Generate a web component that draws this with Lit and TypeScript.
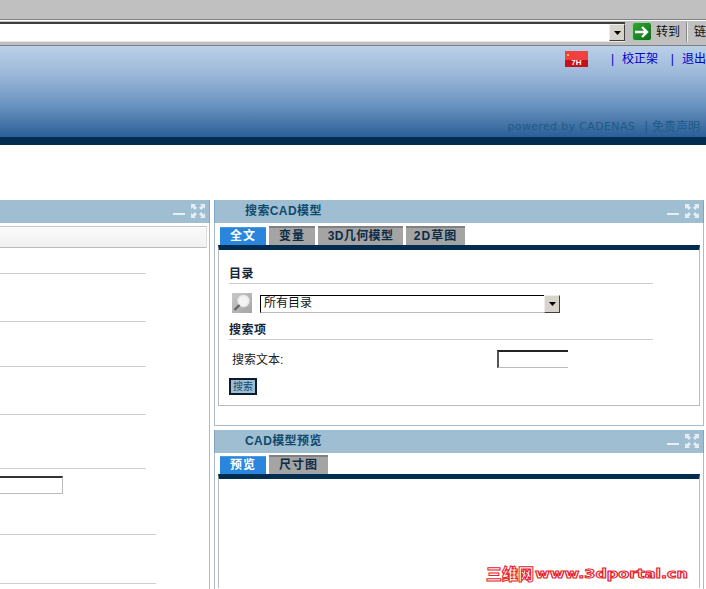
import { LitElement, html, css } from "lit";
import { customElement } from "lit/decorators.js";

const winIcons = html`<div class="win">
  <span class="min"></span>
  <svg width="14" height="14" viewBox="0 0 14 14" fill="#e4edf3">
    <path d="M0 0h5L3.6 1.4 6 3.8 3.8 6 1.4 3.6 0 5z"/>
    <path d="M14 0v5l-1.4-1.4L10.2 6 8 3.8l2.4-2.4L9 0z"/>
    <path d="M0 14V9l1.4 1.4L3.8 8 6 10.2l-2.4 2.4L5 14z"/>
    <path d="M14 14H9l1.4-1.4L8 10.2 10.2 8l2.4 2.4L14 9z"/>
  </svg>
</div>`;

const arrow = html`<svg width="7" height="4" viewBox="0 0 7 4"><path d="M0 0h7L3.5 4z" fill="#000"/></svg>`;

@customElement("app-root")
export class AppRoot extends LitElement {
  static styles = css`
    :host { display: block; width: 706px; height: 589px; overflow: hidden; position: relative; background: #fff; font: 12px "Liberation Sans", "Noto Sans CJK SC", sans-serif; color: #111; }
    .toolbar { height: 46px; box-sizing: border-box; background: #c0c0c0; padding-top: 19px; }
    .bar { height: 27px; box-sizing: border-box; border-top: 1px solid #808080; border-bottom: 1px solid #808080; padding-top: 1px; box-shadow: inset 0 1px 0 #fff; display: flex; align-items: flex-start; }
    .bar > * { flex: none; }
    .addr { width: 625px; height: 20px; margin-top: 1px; box-sizing: border-box; background: #fff; border-top: 2px solid #404040; border-bottom: 1px solid #e8e8e8; display: flex; justify-content: flex-end; }
    .drop { width: 16px; height: 17px; flex: none; box-sizing: border-box; background: #d8d4cc; border: 1px solid; border-color: #eee #404040 #404040 #eee; display: flex; align-items: center; justify-content: center; }
    .go { margin: 1px 0 0 7px; width: 20px; height: 19px; box-sizing: border-box; border: 1px solid #9fd09f; border-radius: 3px; background: linear-gradient(135deg, #35a535, #0a6e1a); display: flex; align-items: center; justify-content: center; }
    .gotext { margin: 3px 0 0 4px; width: 30px; color: #111; line-height: 16px; }
    .sep { width: 1px; height: 20px; margin-top: 1px; background: #888; border-right: 1px solid #eee; }
    .lnk { margin: 3px 0 0 6px; line-height: 16px; white-space: nowrap; }
    .head { height: 91px; box-sizing: border-box; background: linear-gradient(#bad0e8 0%, #9db9da 30%, #6f97c2 62%, #2a5f98 100%); display: flex; flex-direction: column; padding-top: 4px; }
    .links { display: flex; align-items: center; height: 14px; color: #0000c8; }
    .flag { width: 23px; height: 16px; margin: 3px 0 0 565px; background: linear-gradient(#f04040 0 55%, #c81018 55%); color: #fff; font: bold 8px/9px "Liberation Sans", sans-serif; display: flex; align-items: flex-end; justify-content: center; position: relative; }
    .star { position: absolute; left: 2px; top: 3px; width: 2px; height: 2px; background: #fc0; }
    .l1 { margin-left: 23px; width: 60px; white-space: nowrap; }
    .l2 { white-space: nowrap; }
    .gap { margin-left: 8px; }
    .pw { margin-top: auto; height: 17px; display: flex; justify-content: flex-end; padding-right: 6px; color: #1e5a88; font: 11px/14px "DejaVu Sans", "Noto Sans CJK SC", sans-serif; letter-spacing: 0.35px; }
    .pw span:last-child { margin-left: 9px; letter-spacing: 0; font-size: 12px; }
    .dark { height: 8px; background: #002d4f; }
    .cols { display: flex; margin-top: 55px; align-items: flex-start; }
    .left { width: 210px; height: 389px; box-sizing: border-box; border-right: 1px solid #a8bccb; flex: none; }
    .right { width: 490px; margin-left: 4px; flex: none; }
    .ph { height: 23px; box-sizing: border-box; background: #a0bed2; display: flex; align-items: flex-start; color: #0f4a6e; font-weight: bold; font-size: 12px; letter-spacing: 0.4px; padding-left: 30px; line-height: 22px; box-shadow: -1px 0 0 #7fa5c6, 1px 0 0 #7fa5c6; }
    .left .ph { padding: 0; }
    .win { margin-left: auto; margin-right: 4px; margin-top: 4px; display: flex; align-items: flex-start; gap: 6px; }
    .min { width: 12px; height: 2px; background: #e8eff4; margin-top: 9px; }
    .strip { height: 22px; margin: 3px 2px 0 0; box-sizing: border-box; border-top: 1px solid #c4c4c4; border-bottom: 1px solid #bbb; background: linear-gradient(#fafafa, #f0f0f0); border-right: 1px solid #ddd; }
    .row { width: 146px; box-sizing: border-box; border-bottom: 1px solid #cfcfcf; display: flow-root; }
    .row.wide { width: 156px; }
    .lin { display: block; width: 63px; height: 18px; margin-top: 7px; box-sizing: border-box; border-top: 2px solid #333; border-right: 1px solid #bbb; border-bottom: 1px solid #bbb; }
    .panel { box-sizing: border-box; border-left: 1px solid #a8bccb; border-right: 1px solid #a8bccb; }
    .panel.one { height: 226px; border-bottom: 1px solid #a8bccb; }
    .panel.two { height: 159px; margin-top: 4px; }
    .tabs { display: flex; gap: 3px; padding: 0 0 0 5px; height: 22px; box-sizing: border-box; align-items: flex-end; }
    .two .tabs { height: 21px; }
    .tab { height: 19px; box-sizing: border-box; border-top: 2px solid #808080; background: #a4a4a4; color: #0c2c48; font-weight: bold; text-align: center; line-height: 16px; letter-spacing: 1px; }
    .tab.on { background: #2a86dc; color: #fff; border-top: 1px solid #4c9ae4; width: 46px; height: 18px; }
    .w46 { width: 46px; } .w59 { width: 59px; } .w85 { width: 85px; letter-spacing: 0.4px; }
    .body { margin: 0 3px 0 3px; border-top: 5px solid #002d4f; box-sizing: border-box; border-left: 1px solid #bbb; border-right: 1px solid #bbb; }
    .one .body { height: 161px; border-bottom: 1px solid #bbb; padding: 16px 46px 0 10px; }
    .two .body { height: 114px; }
    .sec { font-weight: bold; line-height: 16px; height: 17px; border-bottom: 1px solid #ccc; color: #14263a; letter-spacing: 0.5px; }
    .pick { display: flex; align-items: flex-start; margin: 9px 0 0 3px; height: 21px; }
    .mag { width: 20px; height: 20px; background: linear-gradient(135deg, #c8c8c8, #a4a4a4); display: flex; }
    .sel { margin: 2px 0 0 8px; width: 300px; height: 18px; box-sizing: border-box; border-top: 1px solid #000; border-left: 1px solid #000; border-bottom: 1px solid #bbb; display: flex; justify-content: space-between; line-height: 15px; padding-left: 3px; }
    .sel .drop { height: 18px; margin-top: -1px; }
    .one .sec.s2 { margin-top: 8px; }
    .fld { display: flex; justify-content: space-between; align-items: flex-start; padding-left: 3px; margin: 10px 0 0 0; height: 20px; width: 336px; box-sizing: content-box; line-height: 20px; font-size: 12px; color: #222; }
    .inp { width: 71px; height: 18px; box-sizing: border-box; border-top: 2px solid #222; border-left: 2px solid #555; border-bottom: 1px solid #bbb; }
    .btn { width: 28px; height: 17px; margin-top: 8px; box-sizing: border-box; background: #a0bed2; border: 2px solid #0c1c2c; color: #0f4a6e; font-size: 10px; line-height: 13px; text-align: center; }
    .mark { position: absolute; left: 486px; top: 566px; display: flex; align-items: center; color: #fff; font: bold 12px/17px "DejaVu Sans", "Noto Sans CJK SC", sans-serif; -webkit-text-stroke: 1px #e8202c; white-space: nowrap; }
    .mark b { font-size: 16px; width: 49px; flex: none; }
    .mark span { display: inline-block; transform: scaleX(1.33); transform-origin: left center; }
  `;

  render() {
    const rows = [
      [26, 0], [48, 0], [45, 0], [48, 0], [54, 0], [66, 1], [49, 1],
    ];
    return html`
      <div class="toolbar">
        <div class="bar">
          <div class="addr"><div class="drop">${arrow}</div></div>
          <div class="go">
            <svg width="16" height="14" viewBox="0 0 16 14"><path d="M1 7h12M8 2l5 5-5 5" fill="none" stroke="#fff" stroke-width="2.4"/></svg>
          </div>
          <div class="gotext">转到</div>
          <div class="sep"></div>
          <div class="lnk">链</div>
        </div>
      </div>
      <div class="head">
        <div class="links">
          <div class="flag"><span class="star"></span>7H</div>
          <div class="l1">|<span class="gap">校正架</span></div>
          <div class="l2">|<span class="gap">退出</span></div>
        </div>
        <div class="pw"><span>powered by CADENAS</span><span>| 免责声明</span></div>
      </div>
      <div class="dark"></div>
      <div class="cols">
        <div class="left">
          <div class="ph">${winIcons}</div>
          <div class="strip"></div>
          ${rows.map(([h, w], i) => html`<div class="row ${w ? "wide" : ""}" style="height:${h}px">${i === 5 ? html`<span class="lin"></span>` : ""}</div>`)}
        </div>
        <div class="right">
          <div class="panel one">
            <div class="ph">搜索CAD模型${winIcons}</div>
            <div class="tabs">
              <div class="tab on">全文</div>
              <div class="tab w46">变量</div>
              <div class="tab w85">3D几何模型</div>
              <div class="tab w59">2D草图</div>
            </div>
            <div class="body">
              <div class="sec">目录</div>
              <div class="pick">
                <div class="mag">
                  <svg width="20" height="20" viewBox="0 0 20 20">
                    <circle cx="11.5" cy="8" r="5.5" fill="#f4f4f4" stroke="#e8e8e8" stroke-width="1.5"/>
                    <path d="M7.5 12l-5 5" stroke="#666" stroke-width="2.4"/>
                  </svg>
                </div>
                <div class="sel">所有目录<div class="drop">${arrow}</div></div>
              </div>
              <div class="sec s2">搜索项</div>
              <div class="fld"><span>搜索文本:</span><div class="inp"></div></div>
              <div class="btn">搜索</div>
            </div>
          </div>
          <div class="panel two">
            <div class="ph">CAD模型预览${winIcons}</div>
            <div class="tabs">
              <div class="tab on">预览</div>
              <div class="tab w59">尺寸图</div>
            </div>
            <div class="body"></div>
          </div>
        </div>
      </div>
      <div class="mark"><b>三维网</b><span>www.3dportal.cn</span></div>
    `;
  }
}
